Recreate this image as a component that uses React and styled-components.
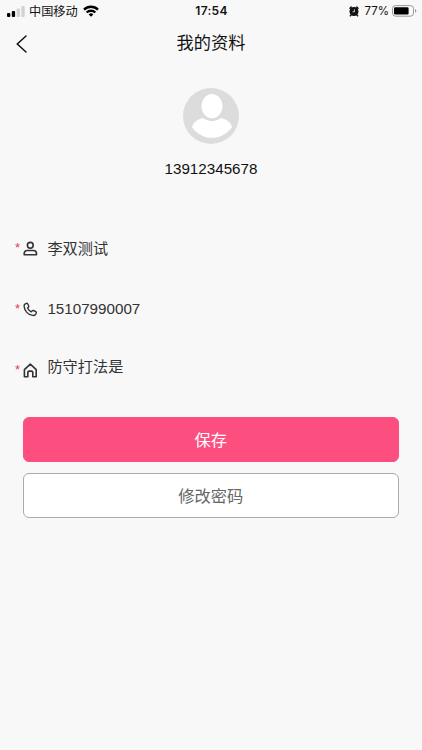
import { useState } from 'react';

import styled, { createGlobalStyle } from 'styled-components';

const GlobalStyle = createGlobalStyle`
  * {
    box-sizing: border-box;
  }
  body {
    margin: 0;
    background: #f8f8f8;
    font-family: "Liberation Sans", "Noto Sans CJK SC", sans-serif;
  }
`
const Container = styled.div`
  width: 100%;
  height: 750px;
  background: #f8f8f8;
  overflow: hidden;
`
const StatusBar = styled.div`
  height: 22px;
  display: grid;
  grid-template-columns: 1fr auto 1fr;
  align-items: center;
  padding: 0 5px 1px 7px;
  color: #111;
`
const StatusGroup = styled.div`
  display: flex;
  align-items: center;
  justify-content: ${props => props.$end ? "flex-end" : "flex-start"};
`
const Carrier = styled.span`
  font-size: 12.2px;
  line-height: 20px;
  padding-top: 2px;
  margin: 0 5px 0 4px;
`
const Time = styled.span`
  font-family: Inter, sans-serif;
  font-size: 12px;
  line-height: 14px;
  font-weight: 600;
  letter-spacing: 0.3px;
  padding-bottom: 1px;
  margin-right: 1px;
`
const Percent = styled.span`
  font-family: Inter, sans-serif;
  font-size: 11.5px;
  margin: 0 3px 0 5px;
`
const Navbar = styled.header`
  height: 42px;
  display: grid;
  grid-template-columns: 40px 1fr 40px;
  align-items: center;
`
const BackButton = styled.button`
  display: flex;
  padding: 2px 0 0 15px;
  border: none;
  background: none;
`
const Title = styled.h1`
  margin: 0;
  font-size: 17.2px;
  line-height: 24px;
  font-weight: 400;
  text-align: center;
  color: #111;
`
const Profile = styled.section`
  display: flex;
  flex-direction: column;
  align-items: center;
  height: 154px;
  padding-top: 24px;
`
const Account = styled.div`
  margin-top: 15px;
  font-size: 15.2px;
  line-height: 20px;
  color: #111;
`
const Form = styled.form`
  display: flex;
  flex-direction: column;
`
const Field = styled.label`
  height: ${props => props.$height}px;
  display: flex;
  align-items: center;
  padding-left: 15px;
`
const Required = styled.span`
  width: 8px;
  font-size: 13px;
  line-height: 16px;
  color: #e0434d;
  padding-top: ${props => props.$drop ? 2 : 0}px;
`
const FieldIcon = styled.span`
  display: flex;
  width: 24.4px;
  padding-top: ${props => props.$drop ? 4 : 0}px;
`
const Input = styled.input`
  flex: 1;
  height: 30px;
  padding: 0;
  margin-bottom: ${props => props.$lift}px;
  border: none;
  outline: none;
  background: none;
  font-family: inherit;
  font-size: 15.2px;
  color: #333;
`
const Actions = styled.div`
  display: flex;
  flex-direction: column;
  gap: 11px;
  padding: 19.5px 23px 0 22.5px;
`
const Button = styled.button`
  height: 45px;
  padding: 0;
  border: 1px solid ${props => props.$primary ? "#fc4f80" : "#aaa"};
  border-radius: 6px;
  background: ${props => props.$primary ? "#fc4f80" : "#fff"};
  color: ${props => props.$primary ? "#fff" : "#666"};
  font-family: inherit;
  font-size: 16.3px;
`

const SignalIcon = () => (
  <svg width="18" height="11" viewBox="0 0 18 11">
    <rect x="0" y="7" width="3.3" height="4" rx="1" fill="#000" />
    <rect x="4.8" y="5" width="3.3" height="6" rx="1" fill="#000" />
    <rect x="9.7" y="2.6" width="3.3" height="8.4" rx="1" fill="#d2d2d2" />
    <rect x="14.4" y="0" width="3.3" height="11" rx="1" fill="#d2d2d2" />
  </svg>
)

const WifiIcon = () => (
  <svg width="16" height="12" viewBox="0 0 16 12" fill="none" stroke="#000" strokeWidth="2.3">
    <path d="M1 4.6a10 10 0 0 1 14 0" />
    <path d="M3.7 7.5a6.1 6.1 0 0 1 8.6 0" />
    <path d="M8 11.7 5.7 9.4a3.3 3.3 0 0 1 4.6 0Z" fill="#000" stroke="none" />
  </svg>
)

const AlarmIcon = () => (
  <svg width="10" height="11" viewBox="0 0 10 11">
    <circle cx="5" cy="5.5" r="4.5" fill="#111" />
    <path d="M1 2.2 2.2 1.1M9 2.2 7.8 1.1M2 9l-.6.8M8 9l.6.8" stroke="#111" strokeWidth="1.5" strokeLinecap="round" />
    <path d="M5.4 3.3v2.5H3.5" fill="none" stroke="#f8f8f8" strokeWidth=".8" />
  </svg>
)

const BatteryIcon = () => (
  <svg width="25" height="12" viewBox="0 0 25 12">
    <rect x=".5" y=".6" width="21" height="10.6" rx="3" fill="none" stroke="#999" />
    <rect x="2" y="2.2" width="14.6" height="7.4" rx="1.4" fill="#000" />
    <path d="M23 4.1q1.3.5 1.3 1.8T23 7.7Z" fill="#999" />
  </svg>
)

const BackIcon = () => (
  <svg width="13" height="18" viewBox="0 0 13 18" fill="none" stroke="#111" strokeWidth="1.5" strokeLinecap="round">
    <path d="M11 1 2.3 9l8.7 8" />
  </svg>
)

const Avatar = () => (
  <svg width="56" height="56" viewBox="0 0 56 56">
    <circle cx="28" cy="28" r="28" fill="#dcdcdc" />
    <ellipse cx="29" cy="18.2" rx="10.4" ry="12.2" fill="#fff" />
    <path d="M19.5 30q9.500 6.500 19 0c5.500 1.500 9 4.500 10.500 9.200C44 46 37 49.800 29 49.800S14 46 9 39.200c1.500-4.700 5-7.700 10.500-9.200Z" fill="#fff" />
  </svg>
)

const iconProps = {
  width: 15,
  height: 15,
  viewBox: "0 0 15 15",
  fill: "none",
  stroke: "#333",
  strokeWidth: 1.6,
  strokeLinejoin: "round",
}

const UserIcon = () => (
  <svg {...iconProps}>
    <circle cx="7.3" cy="4.3" r="2.9" />
    <path d="M1.2 13.800v-1.200c0-2 1.300-3.100 3.200-3.100h5.900c1.900 0 3.200 1.100 3.200 3.100v1.200Z" />
  </svg>
)

const PhoneIcon = () => (
  <svg {...iconProps} strokeWidth="1.4">
    <path d="M2.200 1.900 3.600 1.300c.5-.2.900 0 1.100.5l1 2.200c.2.500.1.900-.3 1.200l-.9.800c.8 1.800 1.900 2.900 3.900 3.800l.9-1c.3-.4.700-.5 1.200-.3l2.300 1.100c.5.200.700.600.5 1.100l-.5 1.400c-.5 1.200-1.700 1.600-3.200 1.300C5 12.500 1.600 8.800 1.100 4.300c-.1-1.100.2-1.900 1.100-2.400Z" />
  </svg>
)

const HomeIcon = () => (
  <svg {...iconProps}>
    <path d="M1.400 6.600 7.300 1.200l5.900 5.400v7.100H9.800V9.600q0-1.500-1.500-1.500h-2q-1.500 0-1.500 1.500v4.100H1.400Z" />
  </svg>
)

const fields = [
  { name: 'name', icon: UserIcon, height: 60, lift: 2 },
  { name: 'phone', icon: PhoneIcon, height: 62, lift: 1 },
  { name: 'address', icon: HomeIcon, height: 57, lift: 7, drop: true },
]

const App = () => {
  const [values, setValues] = useState({
    name: '李双测试',
    phone: '15107990007',
    address: '防守打法是',
  });
  const handleChange = (e) => {
    setValues({ ...values, [e.target.name]: e.target.value })
  }

  return (
    <Container>
      <GlobalStyle />
      <StatusBar>
        <StatusGroup>
          <SignalIcon />
          <Carrier>中国移动</Carrier>
          <WifiIcon />
        </StatusGroup>
        <Time>17:54</Time>
        <StatusGroup $end>
          <AlarmIcon />
          <Percent>77%</Percent>
          <BatteryIcon />
        </StatusGroup>
      </StatusBar>
      <Navbar>
        <BackButton aria-label="返回"><BackIcon /></BackButton>
        <Title>我的资料</Title>
      </Navbar>
      <Profile>
        <Avatar />
        <Account>13912345678</Account>
      </Profile>
      <Form onSubmit={(e) => e.preventDefault()}>
        {fields.map(({ name, icon: Icon, height, lift, drop }) => (
          <Field key={name} $height={height}>
            <Required $drop={drop}>*</Required>
            <FieldIcon $drop={drop}><Icon /></FieldIcon>
            <Input name={name} value={values[name]} onChange={handleChange} $lift={lift} />
          </Field>
        ))}
        <Actions>
          <Button type="submit" $primary>保存</Button>
          <Button type="button">修改密码</Button>
        </Actions>
      </Form>
    </Container>
  );
};

export default App;
